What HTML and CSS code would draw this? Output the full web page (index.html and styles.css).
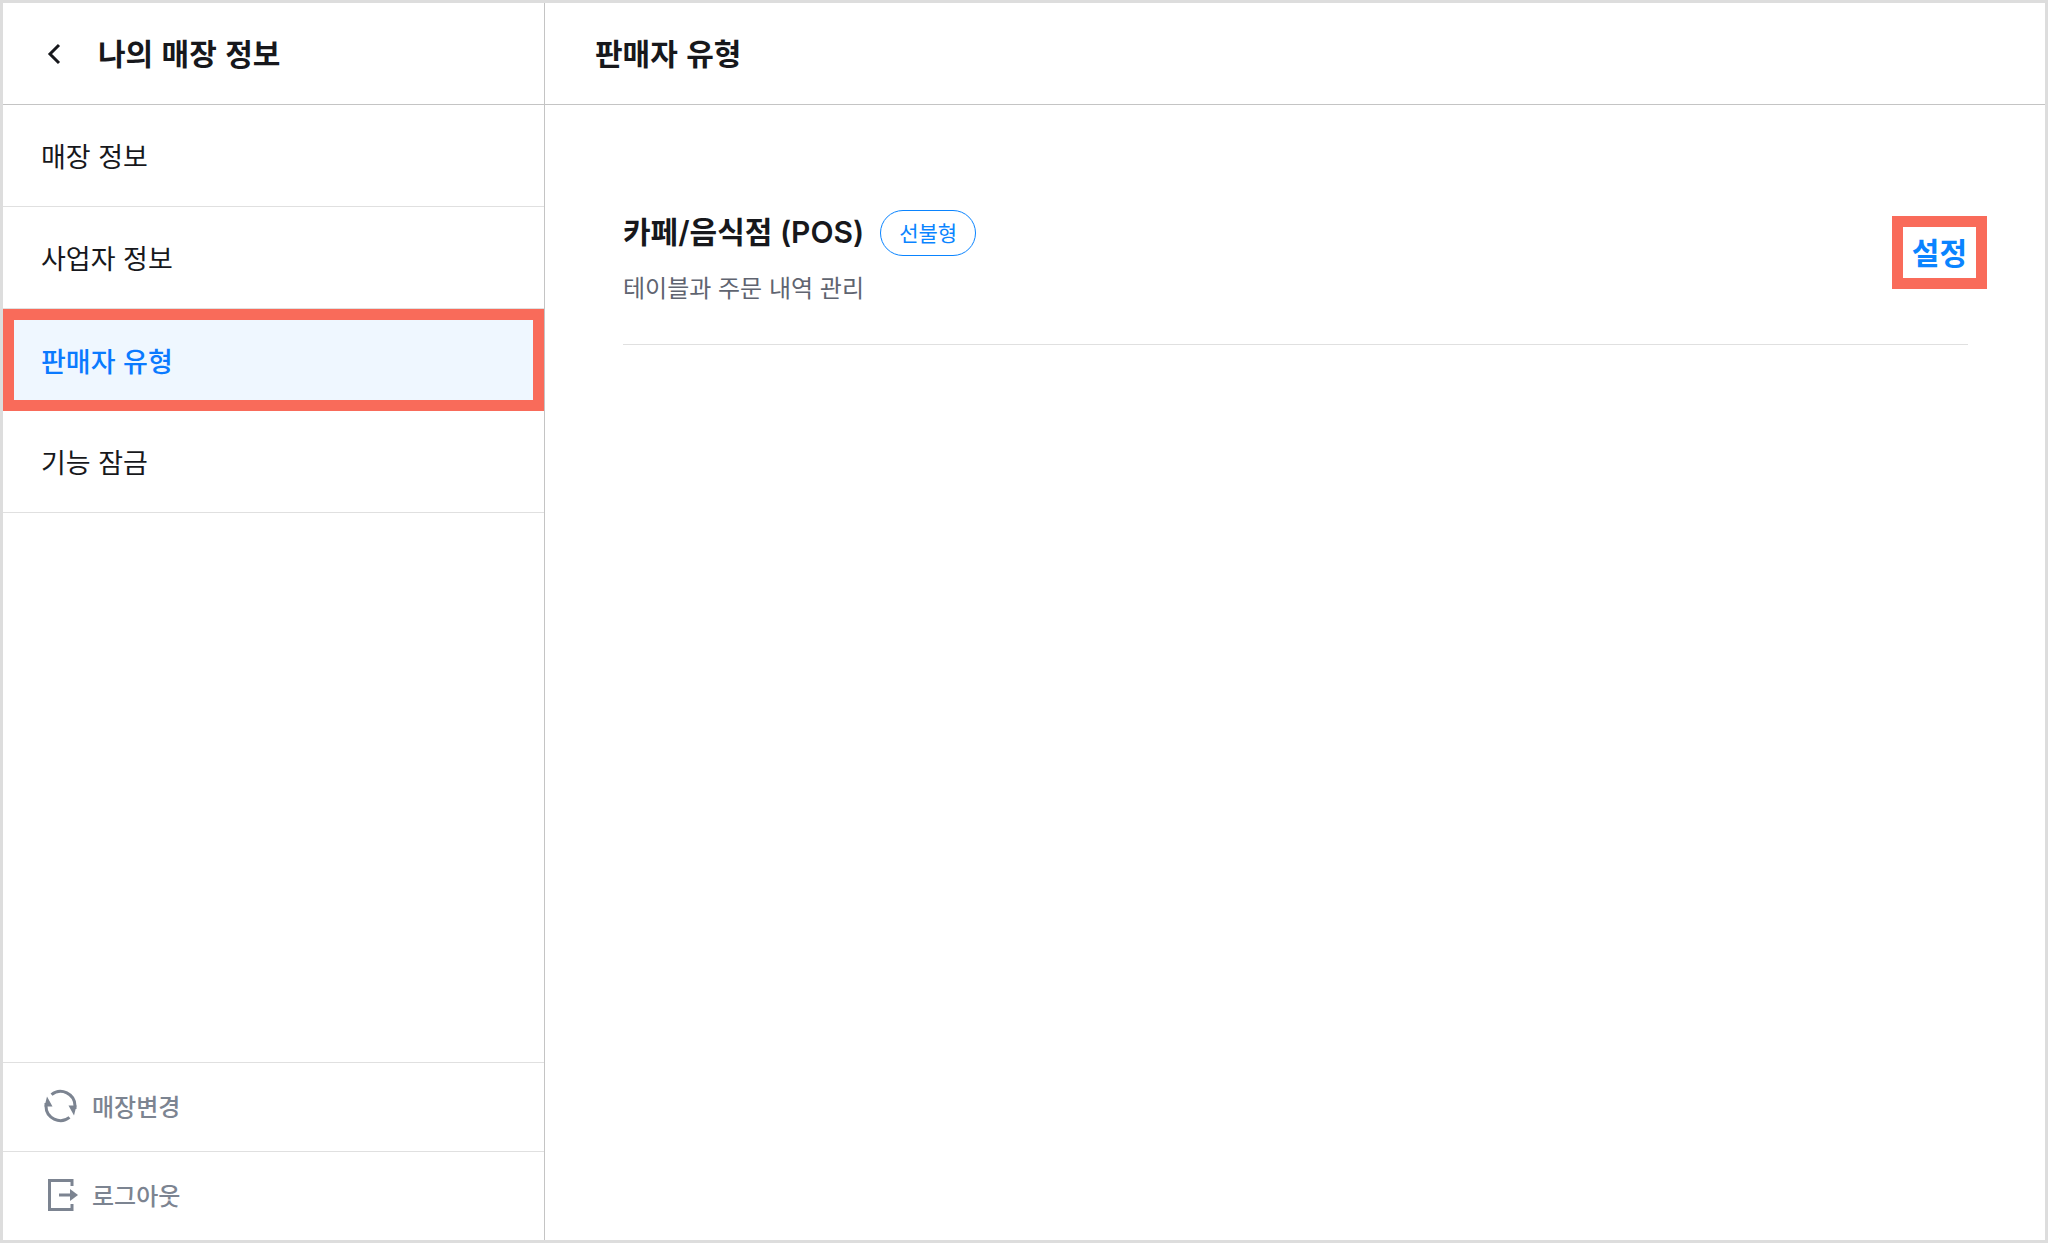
FILE: index.html
```
<!DOCTYPE html>
<html lang="ko">
<head>
<meta charset="UTF-8">
<meta name="viewport" content="width=device-width, initial-scale=1.0">
<title>판매자 유형</title>
<link rel="stylesheet" href="styles.css">
</head>
<body>

<div class="app">
  <aside class="sidebar">
    <header class="header">
      <button type="button" class="btn-back" aria-label="뒤로">
        <svg width="24" height="24" viewBox="0 0 24 24"><path d="M17 3L8 12l9 9" fill="none" stroke="currentColor" stroke-width="3"/></svg>
      </button>
      <h2>나의 매장 정보</h2>
    </header>

    <nav class="menu">
      <a href="#">매장 정보</a>
      <a href="#">사업자 정보</a>
      <a href="#" class="active">판매자 유형</a>
      <a href="#">기능 잠금</a>
    </nav>

    <div class="bottom">
      <button type="button">
        <svg width="36" height="36" viewBox="0 0 36 36">
          <path d="M9.500 6.600A14.500 14.500 0 0 1 33 18v3M27.500 29.400A14.500 14.500 0 0 1 4 18v-3" fill="none" stroke="currentColor" stroke-width="3"/>
          <path d="M5 8.500L10.500 18.500H2.500zM32 27.500L26.500 17.500h8z" fill="currentColor"/>
        </svg>
        매장변경
      </button>
      <button type="button">
        <svg width="36" height="36" viewBox="0 0 36 36">
          <path d="M30 9V3.500H7.500v29H30V27M17 18h12" fill="none" stroke="currentColor" stroke-width="3"/>
          <path d="M28 12l8 6-8 6z" fill="currentColor"/>
        </svg>
        로그아웃
      </button>
    </div>
  </aside>

  <main class="content">
    <header class="header">
      <h1>판매자 유형</h1>
    </header>

    <section class="seller">
      <div class="seller-info">
        <div class="seller-title">
          <h3>카페/음식점 (POS)</h3>
          <span class="badge">선불형</span>
        </div>
        <p>테이블과 주문 내역 관리</p>
      </div>
      <button type="button" class="btn-setting">설정</button>
    </section>
  </main>
</div>

</body>
</html>
```
FILE: styles.css
```
* {
  box-sizing: border-box;
}

body {
  margin: 0;
  color: #17181c;
  background-color: white;
  font-family: "Noto Sans CJK KR", sans-serif;
}

h1, h2, h3, p {
  margin: 0;
}

button {
  font-family: inherit;
  background: none;
  border: none;
  padding: 0;
  cursor: pointer;
}

svg {
  display: block;
}

.app {
  display: flex;
  min-height: 100vh;
  border: 3px solid #dddddd;
}

.sidebar {
  display: flex;
  flex-direction: column;
  width: 542px;
  flex-shrink: 0;
  border-right: 1px solid #c4c4c4;
}

.header {
  display: flex;
  align-items: center;
  height: 102px;
  border-bottom: 1px solid #c4c4c4;
}

.header h1, .header h2 {
  padding-bottom: 4px;
  font-size: 30px;
  line-height: 40px;
  font-weight: bold;
}

.btn-back {
  color: #17181c;
  margin-left: 39px;
  margin-right: 32px;
}

.menu a {
  display: flex;
  align-items: center;
  height: 102px;
  padding-left: 38px;
  border-bottom: 1px solid #e0e0e0;
  color: #17181c;
  font-size: 27px;
  text-decoration: none;
}

.menu .active {
  padding-left: 27px;
  border: 11px solid #f96b5a;
  background-color: #eff7ff;
  color: #0a7aff;
  font-weight: 500;
}

.bottom {
  margin-top: auto;
}

.bottom button {
  display: flex;
  align-items: center;
  gap: 14px;
  width: 100%;
  height: 89px;
  padding-left: 39px;
  padding-bottom: 2px;
  border-top: 1px solid #e0e0e0;
  color: #7c8491;
  font-size: 24px;
  line-height: 32px;
  font-weight: 500;
}

.content {
  flex: 1;
}

.content .header {
  padding-left: 50px;
}

.seller {
  display: flex;
  align-items: flex-start;
  justify-content: space-between;
  margin: 78px 77px 0 78px;
  padding: 27px 0 38px;
  border-bottom: 1px solid #e0e0e0;
}

.seller-title {
  display: flex;
  align-items: center;
  gap: 16px;
}

.seller-title h3 {
  padding-bottom: 2px;
  font-family: Inter, "Noto Sans CJK KR", sans-serif;
  font-size: 30px;
  line-height: 44px;
  font-weight: 600;
}

.badge {
  padding: 0 18px 2px;
  border: 1px solid #0a84ff;
  border-radius: 23px;
  color: #0a84ff;
  font-size: 21px;
  line-height: 42px;
}

.seller-info p {
  margin-top: 13px;
  padding-bottom: 1px;
  color: #5f6470;
  font-size: 24px;
  line-height: 36px;
}

.btn-setting {
  height: 73px;
  margin-top: 6px;
  margin-right: -19px;
  padding: 0 9px 4px;
  border: 11px solid #f96b5a;
  color: #0a84ff;
  font-size: 30px;
  font-weight: 600;
}
```
